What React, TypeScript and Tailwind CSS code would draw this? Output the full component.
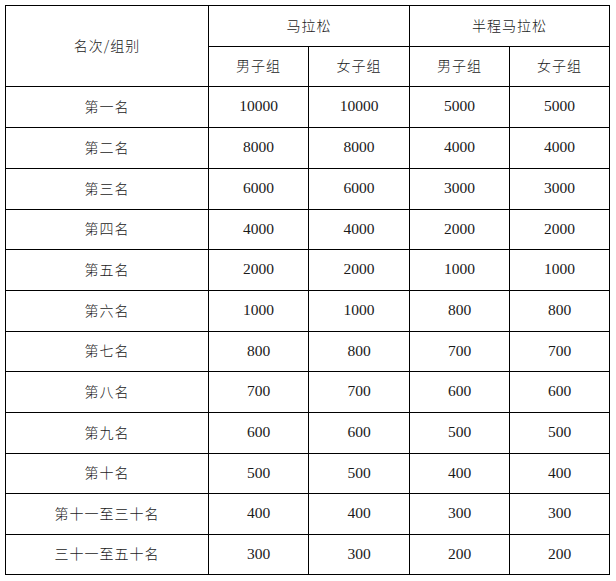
import { Fragment } from "react";

const ROWS: Array<[string, number, number, number, number]> = [
  ["第一名", 10000, 10000, 5000, 5000],
  ["第二名", 8000, 8000, 4000, 4000],
  ["第三名", 6000, 6000, 3000, 3000],
  ["第四名", 4000, 4000, 2000, 2000],
  ["第五名", 2000, 2000, 1000, 1000],
  ["第六名", 1000, 1000, 800, 800],
  ["第七名", 800, 800, 700, 700],
  ["第八名", 700, 700, 600, 600],
  ["第九名", 600, 600, 500, 500],
  ["第十名", 500, 500, 400, 400],
  ["第十一至三十名", 400, 400, 300, 300],
  ["三十一至五十名", 300, 300, 200, 200],
];

const cell = "flex items-center justify-center bg-white pb-[2px]";
const cjk = "[font-family:'Noto_Sans_CJK_SC','Liberation_Serif',serif] text-[14px] tracking-[1px] font-light";
const num = "[font-family:'Liberation_Serif',serif] text-[15.5px]";

export default function App() {
  return (
    <div className="min-h-[581px] w-[616px] bg-white pt-[5px] pl-[5px] text-[#1a1a1a]">
      <div className="grid w-[605px] grid-cols-[202px_99px_100px_99px_99px] grid-rows-[40px_39px_40px_40px_40px_39px_40px_40px_39px_40px_40px_39px_40px_39px] gap-px border border-black bg-black">
        <div className={`${cell} ${cjk} row-span-2`}>名次/组别</div>
        <div className={`${cell} ${cjk} col-span-2`}>马拉松</div>
        <div className={`${cell} ${cjk} col-span-2`}>半程马拉松</div>
        <div className={`${cell} ${cjk}`}>男子组</div>
        <div className={`${cell} ${cjk}`}>女子组</div>
        <div className={`${cell} ${cjk}`}>男子组</div>
        <div className={`${cell} ${cjk}`}>女子组</div>
        {ROWS.map(([label, ...values]) => (
          <Fragment key={label}>
            <div className={`${cell} ${cjk}`}>{label}</div>
            {values.map((v, i) => (
              <div key={i} className={`${cell} ${num}`}>
                {v}
              </div>
            ))}
          </Fragment>
        ))}
      </div>
    </div>
  );
}
